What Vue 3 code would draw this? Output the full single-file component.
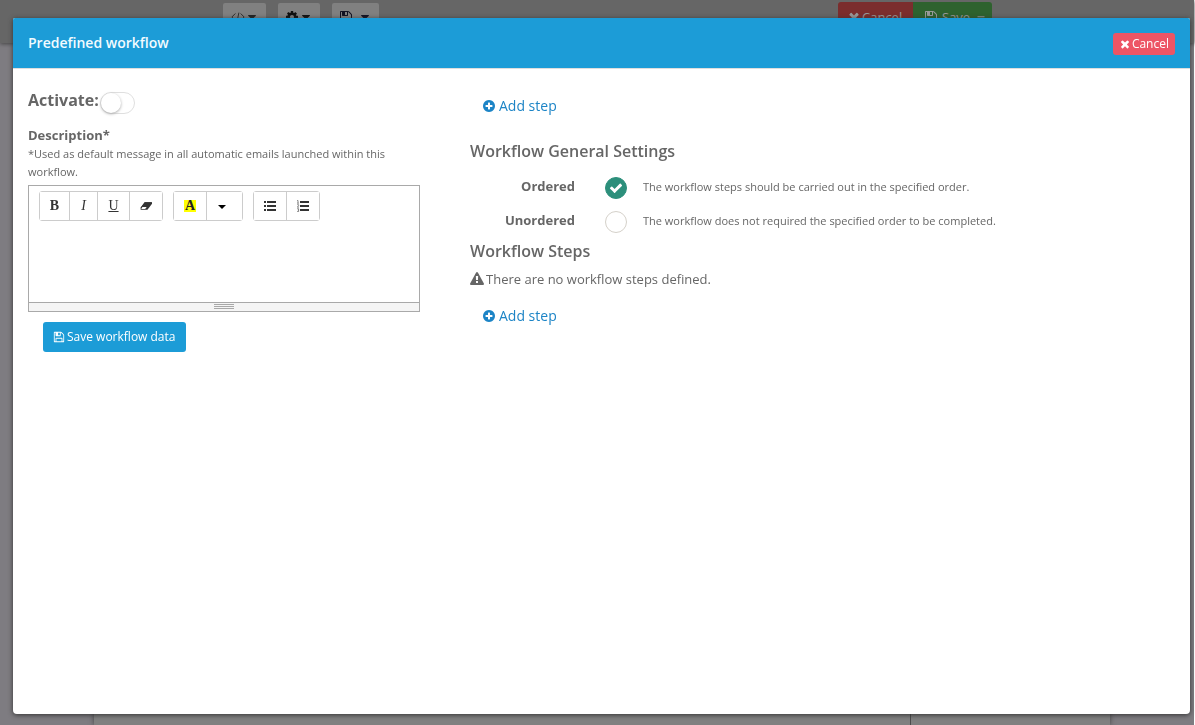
<script setup>
import { ref } from 'vue'

const active = ref(false)
const order = ref('ordered')
const description = ref('')

const icons = {
  times: 'M1490 1322q0 40-28 68l-136 136q-28 28-68 28t-68-28l-294-294-294 294q-28 28-68 28t-68-28l-136-136q-28-28-28-68t28-68l294-294-294-294q-28-28-28-68t28-68l136-136q28-28 68-28t68 28l294 294 294-294q28-28 68-28t68 28l136 136q28 28 28 68t-28 68l-294 294 294 294q28 28 28 68z',
  plus: 'M1344 960v-128q0-26-19-45t-45-19h-256v-256q0-26-19-45t-45-19h-128q-26 0-45 19t-19 45v256h-256q-26 0-45 19t-19 45v128q0 26 19 45t45 19h256v256q0 26 19 45t45 19h128q26 0 45-19t19-45v-256h256q26 0 45-19t19-45zm320-64q0 209-103 385.5t-279.5 279.5-385.5 103-385.5-103-279.5-279.5-103-385.5 103-385.5 279.5-279.5 385.5-103 385.5 103 279.5 279.5 103 385.5z',
  warning: 'M1024 1375v-190q0-14-9.5-23.5t-22.5-9.5h-192q-13 0-22.5 9.5t-9.5 23.5v190q0 14 9.5 23.5t22.5 9.5h192q13 0 22.5-9.5t9.5-23.5zm-2-374l18-459q0-12-10-19-13-11-24-11h-220q-11 0-24 11-10 7-10 21l17 457q0 10 10 16.5t24 6.5h185q14 0 23.5-6.5t10.5-16.5zm-14-934l768 1408q35 63-2 126-17 29-46.5 46t-63.5 17h-1536q-34 0-63.5-17t-46.5-46q-37-63-2-126l768-1408q17-31 47-49t65-18 65 18 47 49z',
  floppy: 'M512 1536h768v-384h-768v384zm896 0h128v-896q0-14-10-38.5t-20-34.5l-281-281q-10-10-34-20t-39-10v416q0 40-28 68t-68 28h-576q-40 0-68-28t-28-68v-416h-128v1280h128v-416q0-40 28-68t68-28h832q40 0 68 28t28 68v416zm-384-928v-320q0-13-9.5-22.5t-22.5-9.5h-192q-13 0-22.5 9.5t-9.5 22.5v320q0 13 9.5 22.5t22.5 9.5h192q13 0 22.5-9.5t9.5-22.5zm640 32v928q0 40-28 68t-68 28h-1344q-40 0-68-28t-28-68v-1344q0-40 28-68t68-28h928q40 0 88 20t76 48l280 280q28 28 48 76t20 88z',
  check: 'M1671 566q0 40-28 68l-724 724-136 136q-28 28-68 28t-68-28l-136-136-362-362q-28-28-28-68t28-68l136-136q28-28 68-28t68 28l294 295 656-657q28-28 68-28t68 28l136 136q28 28 28 68z',
  cog: 'M1152 896q0-106-75-181t-181-75-181 75-75 181 75 181 181 75 181-75 75-181zm512-109v222q0 12-8 23t-20 13l-185 28q-19 54-39 91 35 50 107 138 10 12 10 25t-9 23q-27 37-99 108t-94 71q-12 0-26-9l-138-108q-44 23-91 38-16 136-29 186-7 28-36 28h-222q-14 0-24.5-8.5t-11.5-21.5l-28-184q-49-16-90-37l-141 107q-10 9-25 9-14 0-25-11-126-114-165-168-7-10-7-23 0-12 8-23 15-21 51-66.5t54-70.5q-27-50-41-99l-183-27q-13-2-21-12.5t-8-23.5v-222q0-12 8-23t19-13l186-28q14-46 39-92-40-57-107-138-10-12-10-24 0-10 9-23 26-36 98.5-107.5t94.5-71.5q13 0 26 10l138 107q44-23 91-38 16-136 29-186 7-28 36-28h222q14 0 24.5 8.5t11.5 21.5l28 184q49 16 90 37l142-107q9-9 24-9 13 0 25 10 129 119 165 170 7 8 7 22 0 12-8 23-15 21-51 66.5t-54 70.5q26 50 41 98l183 28q13 2 21 12.5t8 23.5z',
  caret: 'M1408 704q0 26-19 45l-448 448q-19 19-45 19t-45-19l-448-448q-19-19-19-45t19-45 45-19h896q26 0 45 19t19 45z'
}
</script>

<template>
  <div class="page">
    <div class="topbar">
      <div class="tools">
        <button class="tool code" type="button" aria-label="Code">
          <svg class="icon" viewBox="0 0 16 14"><path d="M5 3 1 7l4 4M11 3l4 4-4 4M9 2 7 12" fill="none" stroke="currentColor" /></svg>
          <svg class="icon" viewBox="0 0 1792 1792"><path :d="icons.caret" /></svg>
        </button>
        <button class="tool gear" type="button" aria-label="Settings">
          <svg class="icon" viewBox="0 0 1792 1792"><path :d="icons.cog" /></svg>
          <svg class="icon" viewBox="0 0 1792 1792"><path :d="icons.caret" /></svg>
        </button>
        <button class="tool disk" type="button" aria-label="Save options">
          <svg class="icon" viewBox="0 0 1792 1792"><path :d="icons.floppy" /></svg>
          <svg class="icon" viewBox="0 0 1792 1792"><path :d="icons.caret" /></svg>
        </button>
      </div>
      <div class="actions">
        <button class="action red" type="button">
          <svg class="icon" viewBox="0 0 1792 1792"><path :d="icons.times" /></svg>Cancel
        </button>
        <button class="action green" type="button">
          <svg class="icon" viewBox="0 0 1792 1792"><path :d="icons.floppy" /></svg>Save
          <svg class="icon" viewBox="0 0 1792 1792"><path d="M448 800h896v128h-896z" /></svg>
        </button>
      </div>
    </div>
    <div class="sheet"><div class="sheet-main"></div><div class="sheet-side"></div></div>
  </div>

  <div class="overlay">
    <section class="modal" role="dialog" aria-labelledby="dialog-title">
      <header class="modal-head">
        <h1 id="dialog-title">Predefined workflow</h1>
        <button class="cancel" type="button">
          <svg class="icon" viewBox="0 0 1792 1792"><path :d="icons.times" /></svg>Cancel
        </button>
      </header>

      <div class="modal-body">
        <form class="left" @submit.prevent>
          <div class="activate">
            <label for="activate">Activate:</label>
            <input id="activate" v-model="active" class="switch" type="checkbox" />
          </div>
          <label class="desc-label" for="description">Description*</label>
          <p class="hint">*Used as default message in all automatic emails launched within this workflow.</p>

          <div class="editor">
            <div class="toolbar">
              <div class="group">
                <button class="w-bold serif bold" type="button">B</button>
                <button class="w-italic serif italic" type="button">I</button>
                <button class="w-base serif under" type="button">U</button>
                <button class="w-wide" type="button" aria-label="Clear formatting">
                  <svg class="glyph" viewBox="0 0 14 14"><path d="M5.500 2.500H14L9.200 9H.700z" fill="#333" /><path d="M.700 9 5.500 2.500H14v2L8.700 11.500H.700z" fill="#333" /><path d="M2.800 8.200h5L6 10.500H1.500z" fill="#fff" /></svg>
                </button>
              </div>
              <div class="group">
                <button class="w-base serif bold" type="button"><span class="mark">A</span></button>
                <button class="w-caret" type="button" aria-label="More colors"><svg class="glyph caret" viewBox="0 0 14 14"><path d="M3 6h8l-4 4z" /></svg></button>
              </div>
              <div class="group">
                <button class="w-base" type="button" aria-label="Bulleted list">
                  <svg class="glyph" viewBox="0 0 12 12"><path d="M0 1h2v2H0zM0 5h2v2H0zM0 9h2v2H0zM3 1h9v2H3zM3 5h9v2H3zM3 9h9v2H3z" fill="#333" /></svg>
                </button>
                <button class="w-wide" type="button" aria-label="Numbered list">
                  <svg class="glyph" viewBox="0 0 12 12"><path d="M3 1h9v2H3zM3 5h9v2H3zM3 9h9v2H3z" fill="#333" /><path d="M.2.500h.8v2.700M.2 3.200h1.600M.2 4.700h1.400v1L.3 7.200h1.600M.2 8.700h1.400v1.300H.8M1.600 10v1.500H.2" fill="none" stroke="#555" stroke-width=".7" /></svg>
                </button>
              </div>
            </div>
            <textarea id="description" v-model="description"></textarea>
            <div class="resize"><span></span></div>
          </div>

          <button class="save" type="submit">
            <svg class="icon" viewBox="0 0 1792 1792"><path :d="icons.floppy" /></svg>Save workflow data
          </button>
        </form>

        <div class="right">
          <a class="add" href="#"><svg class="icon" viewBox="0 0 1792 1792"><path :d="icons.plus" /></svg>Add step</a>
          <h2 class="general">Workflow General Settings</h2>
          <div class="option">
            <label for="ordered">Ordered</label>
            <span class="radio">
              <input id="ordered" v-model="order" type="radio" name="order" value="ordered" />
              <svg v-if="order === 'ordered'" class="icon" viewBox="0 0 1792 1792"><path :d="icons.check" /></svg>
            </span>
            <span class="note">The workflow steps should be carried out in the specified order.</span>
          </div>
          <div class="option">
            <label for="unordered">Unordered</label>
            <span class="radio">
              <input id="unordered" v-model="order" type="radio" name="order" value="unordered" />
              <svg v-if="order === 'unordered'" class="icon" viewBox="0 0 1792 1792"><path :d="icons.check" /></svg>
            </span>
            <span class="note">The workflow does not required the specified order to be completed.</span>
          </div>
          <h2 class="steps">Workflow Steps</h2>
          <p class="empty"><svg class="icon" viewBox="0 0 1792 1792"><path :d="icons.warning" /></svg>There are no workflow steps defined.</p>
          <a class="add" href="#"><svg class="icon" viewBox="0 0 1792 1792"><path :d="icons.plus" /></svg>Add step</a>
        </div>
      </div>
    </section>
  </div>
</template>

<style>
body { margin: 0; overflow: hidden; }
</style>

<style scoped>
* { box-sizing: border-box; }
button, input, textarea { font: inherit; margin: 0; }
button { cursor: pointer; }
h1, h2, p { margin: 0; }
.icon { width: 14px; height: 14px; fill: currentColor; flex: none; }
.page {
  display: flex; flex-direction: column; height: 100vh;
  background: #7e7c81; border-right: 1px solid #fff;
  font: 13px/18px "Open Sans", sans-serif;
}
.topbar {
  position: relative;
  display: flex; justify-content: space-between; align-items: flex-start;
  height: 43px; padding: 2px 202px 0 223px; flex: none;
  background: #666; box-shadow: 0 1px 4px #444;
}
.tools { display: flex; gap: 12px; padding-top: 1px; }
.tool {
  display: flex; align-items: center; justify-content: center;
  height: 28px; padding: 0; border: 0; border-radius: 2px; background: #808080; color: #111;
}
.code { width: 43px; color: #222; }
.gear { width: 42px; }
.disk { width: 47px; gap: 5px; color: #112; }
.actions { display: flex; }
.action {
  display: flex; align-items: center; gap: 1px; height: 30px; padding: 0 9px;
  border: 0; color: #999; font-size: 13px;
}
.red { width: 75px; background: #7b2d2d; border-radius: 3px 0 0 3px; }
.green { width: 79px; gap: 4px; padding: 0 11px; background: #2e622e; border-radius: 0 3px 3px 0; }
.sheet { display: flex; flex: 1; margin: 0 84px 0 94px; background: #808080; box-shadow: 0 0 5px #444; }
.sheet-main { flex: 817; border-right: 1px solid #4c4c4c; }
.sheet-side { flex: 199; }

.overlay { position: fixed; inset: 0; display: flex; padding: 18px 5px 11px 13px; }
.modal {
  display: flex; flex-direction: column; flex: 1; overflow: hidden;
  background: #fff; color: #666;
  border-radius: 2px 2px 4px 4px; box-shadow: 0 1px 5px #333;
  font: 13px/18px "Open Sans", sans-serif;
}
.modal-head {
  display: flex; align-items: center; justify-content: space-between;
  height: 51px; padding: 0 15px; flex: none;
  background: #1c9cd7; border-bottom: 1px solid #dedede; color: #f2fbff;
}
h1 { font-size: 14px; line-height: 20px; font-weight: 600; }
.cancel {
  display: flex; align-items: center; height: 22px; padding: 0 6px; gap: 1px; margin-top: 2px;
  border: 0; border-radius: 3px; background: #ed5565; color: #fff; font-size: 12px;
}
.cancel .icon, .save .icon { width: 12px; height: 12px; }
.modal-body {
  display: grid; grid-template-columns: 392fr 705fr; gap: 50px;
  padding: 19px 15px; align-items: start;
}
.activate { display: flex; gap: 1px; font-size: 16px; line-height: 24px; font-weight: 700; height: 37px; }
.switch {
  appearance: none; width: 35px; height: 22px; margin-top: 4px;
  border: 1px solid #dfdfdf; border-radius: 11px; background: #fff;
}
.switch::before {
  content: ""; display: block; width: 20px; height: 20px;
  border-radius: 50%; background: #fff; box-shadow: 0 1px 3px #aaa;
}
.switch:checked { background: #1c9cd7; padding-left: 13px; }
.desc-label { display: block; font-weight: 700; line-height: 20px; }
.hint { font-size: 11px; line-height: 18px; }
.editor { display: flex; flex-direction: column; margin-top: 4px; border: 1px solid #a9a9a9; }
.toolbar { display: flex; gap: 10px; padding: 5px 10px; }
.group { display: flex; border: 1px solid #ccc; border-radius: 3px; }
.group button {
  display: flex; align-items: center; justify-content: center; height: 28px;
  padding: 0; border: 0; background: #fff; color: #333;
}
.group button + button { border-left: 1px solid #ccc; }
.group .w-italic { width: 28px; }
.group .w-bold { width: 29px; }
.group .w-base { width: 32px; }
.group .w-wide { width: 33px; }
.group .w-caret { width: 36px; padding-right: 5px; color: #000; }
.group .serif { font-family: "Liberation Serif", serif; font-size: 14px; line-height: 14px; }
.bold { font-weight: 700; }
.italic { font-style: italic; }
.under { text-decoration: underline; }
.mark { background: #ff0; color: #222; padding: 0 1px; line-height: 12px; }
.glyph { width: 12px; height: 12px; }
.caret { width: 14px; height: 14px; }
textarea { height: 76px; border: 0; outline: 0; padding: 5px 10px; resize: none; background: #fff; color: #666; }
.resize { display: flex; justify-content: center; height: 9px; padding-top: 1px; border-top: 1px solid #a9a9a9; background: #f5f5f5; }
.resize span { width: 20px; height: 5px; background: repeating-linear-gradient(#a9a9a9 0 1px, #f5f5f5 1px 2px); }
.save {
  display: flex; align-items: center; gap: 2px; height: 30px; margin: 10px 15px; padding: 0 11px 0 10px;
  border: 0; border-radius: 3px; background: #1c9cd7; color: #fff; font-size: 12px;
}
.right { display: flex; flex-direction: column; align-items: flex-start; }
.add {
  display: flex; align-items: center; gap: 3px; margin: 8px 12px 0;
  color: #1c84c6; font-size: 14px; line-height: 20px; text-decoration: none;
}
h2 { font-size: 16px; line-height: 20px; font-weight: 600; }
.general { margin: 25px 0 10px; }
.steps { margin-top: 2px; }
.option { display: flex; align-items: center; height: 34px; }
.option label { width: 105px; text-align: right; font-weight: 700; line-height: 20px; padding-bottom: 4px; }
.radio { display: grid; place-items: center; width: 22px; margin: 0 16px 0 30px; }
.radio > * { grid-area: 1 / 1; }
.radio input { appearance: none; width: 22px; height: 22px; border: 1px solid #d4d0c9; border-radius: 50%; background: #fff; }
.radio input:checked { border-color: #2c8f7b; background: #2c8f7b; }
.radio svg { color: #fff; pointer-events: none; }
.note { font-size: 11px; padding-bottom: 2px; }
.empty { display: flex; align-items: center; gap: 2px; margin: 9px 0 10px; }
</style>
